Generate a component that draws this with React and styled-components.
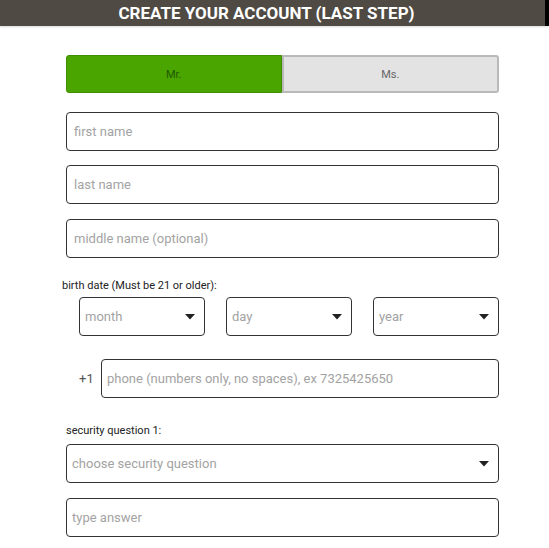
import React from "react";
import styled, { createGlobalStyle } from "styled-components";

const GlobalStyle = createGlobalStyle`
  html, body {
    margin: 0;
    padding: 0;
    background: #fff;
    font-family: Roboto, "Liberation Sans", Arial, sans-serif;
  }
`;

const Page = styled.div`
  width: 549px;
  height: 548px;
  overflow: hidden;
  background: #fff;
`;

const Header = styled.div`
  height: 26px;
  display: flex;
  align-items: center;
  justify-content: center;
  background: #4f4a43;
  border-right: 4px solid #000;
  box-shadow: 0 1px 2px rgba(0, 0, 0, 0.15);
  color: #fff;
  font-weight: 700;
  font-size: 17px;
  letter-spacing: 0;
  padding-right: 12px;
`;

const Form = styled.div`
  width: 433px;
  margin-left: 66px;
  display: flex;
  flex-direction: column;
`;

const Toggle = styled.div`
  margin-top: 29px;
  height: 38px;
  display: flex;
`;

const ToggleOption = styled.div`
  flex: 1;
  display: flex;
  align-items: center;
  justify-content: center;
  font-size: 11px;
  box-sizing: border-box;
  color: ${(p) => (p.active ? "#1f5a00" : "#666")};
  background: ${(p) => (p.active ? "#4aa500" : "#e3e3e3")};
  border: ${(p) => (p.active ? "1px solid #3f8f00" : "2px solid #b9b9b9")};
  border-radius: ${(p) => (p.active ? "3px 0 0 3px" : "0 3px 3px 0")};
`;

const Field = styled.div`
  box-sizing: border-box;
  height: 39px;
  border: 1px solid #333;
  border-radius: 4px;
  display: flex;
  align-items: center;
  padding: 0 ${(p) => p.pad || 7}px;
  margin-top: ${(p) => p.top || 0}px;
  font-size: 13px;
  color: #a3a3a3;
  flex: ${(p) => (p.grow ? 1 : "none")};
  width: ${(p) => (p.w ? `${p.w}px` : "auto")};
`;

const Placeholder = styled.span`
  flex: 1;
  white-space: nowrap;
`;

const Label = styled.div`
  font-size: 11px;
  color: #222;
  margin-top: ${(p) => p.top}px;
  margin-left: ${(p) => p.left || 0}px;
  line-height: 13px;
`;

const DateRow = styled.div`
  margin-top: 5px;
  margin-left: 13px;
  display: flex;
  justify-content: space-between;
`;

const PhoneRow = styled.div`
  margin-top: 23px;
  display: flex;
  align-items: center;
`;

const Prefix = styled.span`
  width: 35px;
  box-sizing: border-box;
  padding-left: 13px;
  font-size: 13px;
  color: #555;
`;

const Caret = () => (
  <svg width="10" height="6" viewBox="0 0 10 6">
    <path d="M0 0 L10 0 L5 5.5 Z" fill="#222" />
  </svg>
);

export default function App() {
  return (
    <Page>
      <GlobalStyle />
      <Header>CREATE YOUR ACCOUNT (LAST STEP)</Header>
      <Form>
        <Toggle>
          <ToggleOption active>Mr.</ToggleOption>
          <ToggleOption>Ms.</ToggleOption>
        </Toggle>
        <Field top={19}>
          <Placeholder>first name</Placeholder>
        </Field>
        <Field top={14}>
          <Placeholder>last name</Placeholder>
        </Field>
        <Field top={15}>
          <Placeholder>middle name (optional)</Placeholder>
        </Field>
        <Label top={21} left={-4}>
          birth date (Must be 21 or older):
        </Label>
        <DateRow>
          <Field w={126} pad={5}>
            <Placeholder>month</Placeholder>
            <Caret />
            <span style={{ width: 4 }} />
          </Field>
          <Field w={126} pad={5}>
            <Placeholder>day</Placeholder>
            <Caret />
            <span style={{ width: 4 }} />
          </Field>
          <Field w={126} pad={5}>
            <Placeholder>year</Placeholder>
            <Caret />
            <span style={{ width: 4 }} />
          </Field>
        </DateRow>
        <PhoneRow>
          <Prefix>+1</Prefix>
          <Field grow pad={5}>
            <Placeholder>phone (numbers only, no spaces), ex 7325425650</Placeholder>
          </Field>
        </PhoneRow>
        <Label top={26}>security question 1:</Label>
        <Field top={7} pad={5}>
          <Placeholder>choose security question</Placeholder>
          <Caret />
          <span style={{ width: 4 }} />
        </Field>
        <Field top={15} pad={5}>
          <Placeholder>type answer</Placeholder>
        </Field>
      </Form>
    </Page>
  );
}
